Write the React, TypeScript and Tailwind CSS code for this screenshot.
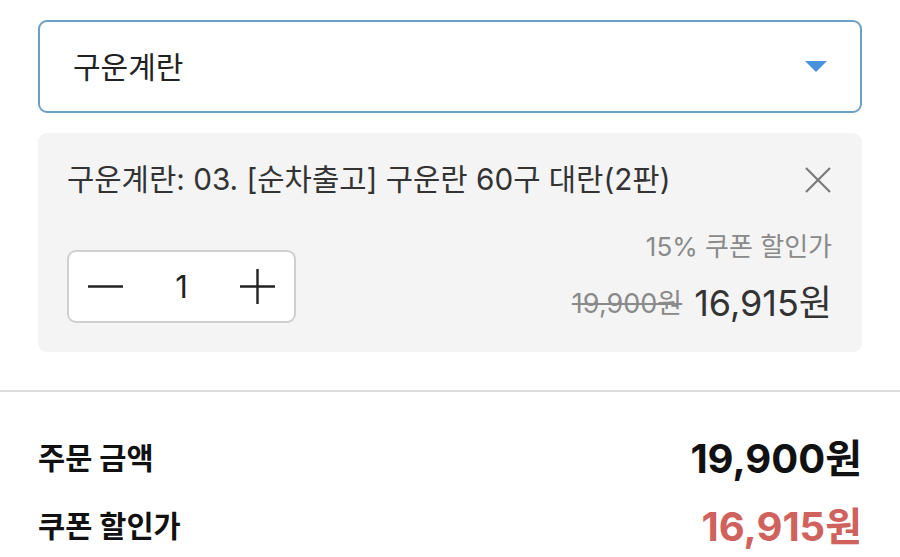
const font = "font-['Inter','Noto_Sans_CJK_KR',sans-serif]";

function SelectBox() {
  return (
    <div className="flex h-[93px] items-center justify-between rounded-[9px] border-2 border-[#6b9fc6] bg-white pl-[33px] pr-[33px]">
      <span className="text-[30px] leading-none text-[#222]">구운계란</span>
      <svg width="22" height="11" viewBox="0 0 22 11">
        <path d="M0 0 H22 L11 11 Z" fill="#4a92dc" />
      </svg>
    </div>
  );
}

function Stepper() {
  return (
    <div className="flex h-[73px] w-[229px] items-center justify-between rounded-[9px] border-2 border-[#cfcfcf] bg-white px-[18px]">
      <svg width="37" height="37" viewBox="0 0 37 37">
        <path d="M1 18.5 H36" stroke="#222" strokeWidth="2.4" />
      </svg>
      <span className="text-[31px] leading-none text-[#222]">1</span>
      <svg width="37" height="37" viewBox="0 0 37 37">
        <path d="M1 18.5 H36 M18.5 1 V36" stroke="#222" strokeWidth="2.4" />
      </svg>
    </div>
  );
}

function OptionCard() {
  return (
    <div className="flex h-[219px] flex-col rounded-[9px] bg-[#f4f4f5] pl-[29px] pr-[30px] pt-[27px]">
      <div className="flex h-[40px] items-center justify-between">
        <span className="text-[29.7px] leading-none text-[#333]">구운계란: 03. [순차출고] 구운란 60구 대란(2판)</span>
        <svg width="28" height="28" viewBox="0 0 28 28">
          <path d="M2 2 L26 26 M26 2 L2 26" stroke="#7a7a7a" strokeWidth="2.2" />
        </svg>
      </div>
      <div className="mt-[31px] flex items-end justify-between">
        <Stepper />
        <div className="flex flex-col items-end">
          <span className="flex h-[32px] items-center text-[26px] leading-none text-[#8a8a8a]">15% 쿠폰 할인가</span>
          <div className="mt-[20px] flex h-[40px] items-center gap-[12px]">
            <span className="text-[27px] leading-none text-[#8a8a8a] line-through decoration-2">19,900원</span>
            <span className="text-[36px] leading-none text-[#333]">16,915원</span>
          </div>
        </div>
      </div>
    </div>
  );
}

export default function App() {
  return (
    <div className={`${font} h-[557px] w-[900px] overflow-hidden bg-white`}>
      <div className="flex flex-col gap-[20px] px-[38px] pt-[20px]">
        <SelectBox />
        <OptionCard />
      </div>
      <div className="mt-[38px] h-[2px] bg-[#dcdcdc]" />
      <div className="flex flex-col gap-[20px] px-[38px] pt-[43px]">
        <div className="flex h-[48px] items-center justify-between">
          <span className="text-[29.5px] font-bold leading-none text-[#111]">주문 금액</span>
          <span className="text-[40px] font-bold leading-none text-[#111]">19,900원</span>
        </div>
        <div className="flex h-[48px] items-center justify-between">
          <span className="text-[29.5px] font-bold leading-none text-[#111]">쿠폰 할인가</span>
          <span className="text-[40px] font-bold leading-none text-[#d0625e]">16,915원</span>
        </div>
      </div>
    </div>
  );
}
